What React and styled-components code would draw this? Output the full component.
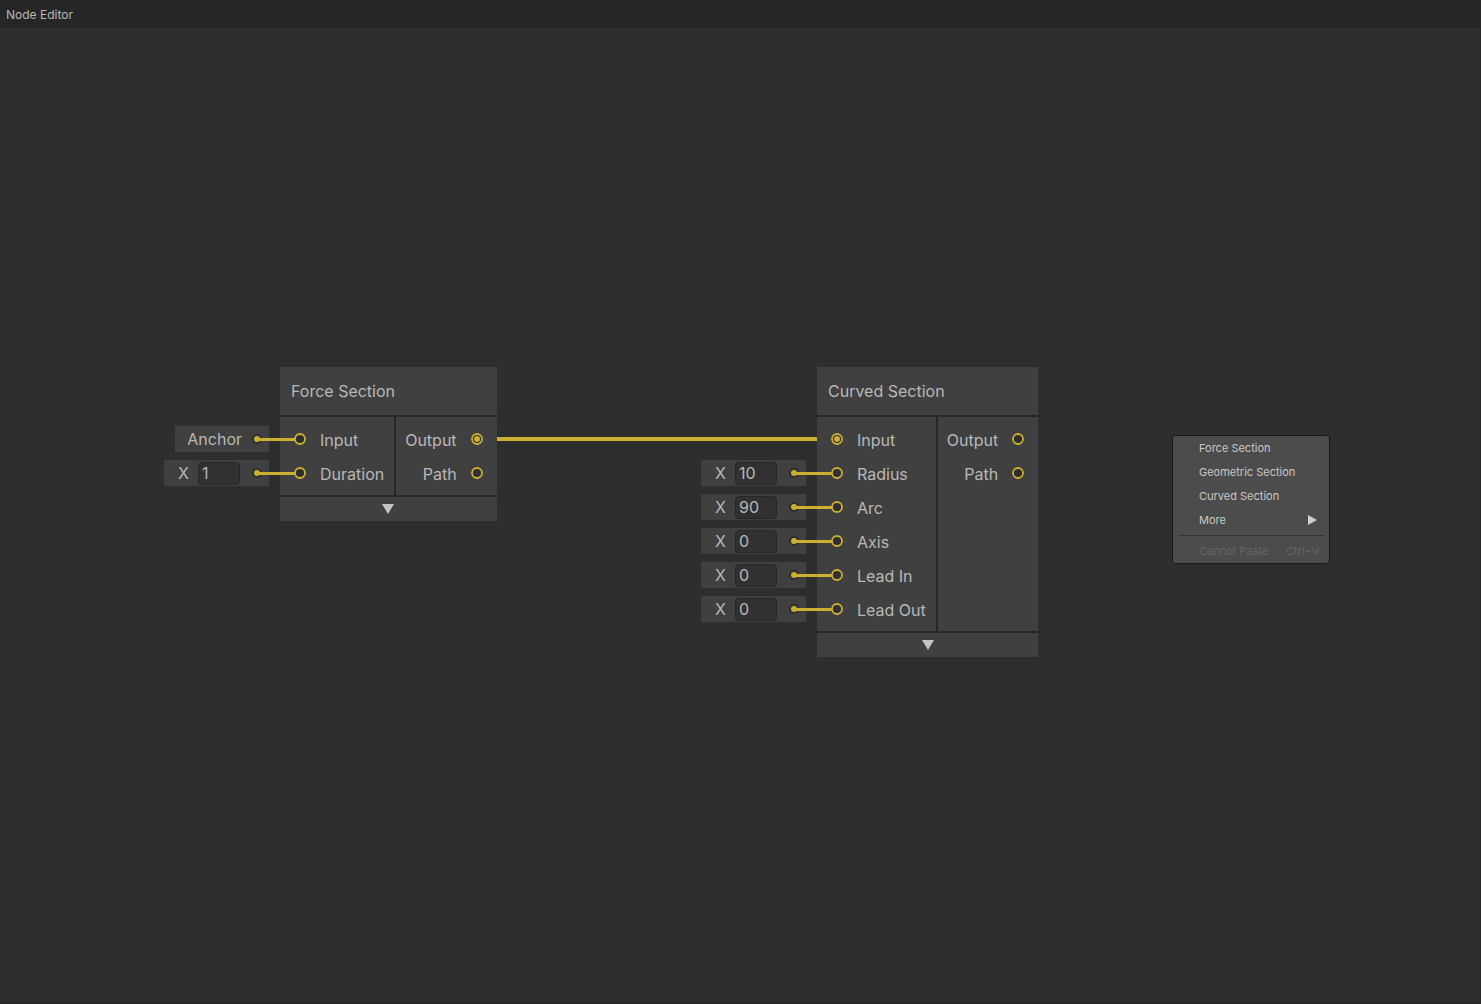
import React from "react";
import styled, { createGlobalStyle } from "styled-components";

const colors = {
  canvas: "#2e2e2e",
  bar: "#262626",
  panel: "#404040",
  line: "#272727",
  field: "#313131",
  text: "#b8b8b8",
  wire: "#ccb032",
  socket: "#2f2f2f",
};

const GlobalStyle = createGlobalStyle`
  *, *::before, *::after { box-sizing: border-box; }
  body {
    margin: 0;
    background: ${colors.canvas};
    color: ${colors.text};
    font-family: Inter, "Liberation Sans", sans-serif;
    font-size: 16px;
    line-height: 20px;
  }
  button, input { font: inherit; color: inherit; }
`;

const Window = styled.div`
  display: flex;
  flex-direction: column;
  min-height: 100vh;
  border-right: 1px solid #292929;
  border-bottom: 2px solid #272727;
`;

const TitleBar = styled.header`
  height: 28px;
  padding: 1px 6px 0;
  background: ${colors.bar};
`;

const Title = styled.h1`
  margin: 0;
  font-size: 12px;
  font-weight: 400;
  line-height: 28px;
`;

const Canvas = styled.main`
  position: relative;
  flex: 1;
  overflow: hidden;
`;

const Wires = styled.svg`
  position: absolute;
  inset: 0;
  width: 100%;
  height: 100%;
`;

const NodeBox = styled.section`
  position: absolute;
  left: ${(p) => p.$x}px;
  top: ${(p) => p.$y}px;
  display: flex;
  flex-direction: column;
  background: ${colors.panel};
`;

const NodeTitle = styled.h2`
  margin: 0;
  padding: 0 11px;
  font-size: 16px;
  font-weight: 400;
  line-height: 48px;
`;

const NodeBody = styled.div`
  display: flex;
  border: solid ${colors.line};
  border-width: 2px 0;
`;

const PortList = styled.ul`
  flex: ${(p) => (p.$side === "in" ? "1 0 auto" : "0 0 auto")};
  display: flex;
  flex-direction: column;
  margin: 0;
  padding: ${(p) => (p.$side === "in" ? "5px 10px 5px 14px" : "5px 14px 5px 9px")};
  border-left: ${(p) => (p.$side === "in" ? "0" : `2px solid ${colors.line}`)};
  list-style: none;
`;

const PortRow = styled.li`
  position: relative;
  display: flex;
  flex-direction: ${(p) => (p.$side === "in" ? "row" : "row-reverse")};
  align-items: center;
  gap: 14px;
  height: 34px;
`;

const PortName = styled.span`
  padding-top: 2px;
  white-space: nowrap;
`;

const Socket = styled.svg`
  flex: none;
  display: block;
  width: 12px;
  height: 12px;
`;

const CollapseButton = styled.button`
  display: flex;
  align-items: center;
  justify-content: center;
  height: 24px;
  padding: 0;
  border: 0;
  background: transparent;
`;

/* Default value attached to the outer side of an unconnected input. */
const ValueChip = styled.div`
  position: absolute;
  right: calc(100% + 25px);
  display: flex;
  align-items: center;
  height: 26px;
  padding: 0 7px 0 ${(p) => (p.$wide ? 14 : 12)}px;
  background: ${colors.panel};
`;

const ChipText = styled.span`
  margin-right: 10px;
`;

const AxisLabel = styled.label`
  width: 20px;
`;

const ValueInput = styled.input`
  width: 42px;
  height: 23px;
  margin-right: 12px;
  padding: 0 3px;
  border: 1px solid #262626;
  border-radius: 4px;
  background: ${colors.field};
`;

const ChipDot = styled.span`
  position: relative;
  width: 10px;
  height: 10px;
  border: 2px solid ${colors.socket};
  border-radius: 50%;
  background: ${colors.wire};

  &::after {
    content: "";
    position: absolute;
    left: 3px;
    top: 0;
    bottom: 0;
    width: 38px;
    height: 3px;
    margin: auto 0;
    background: ${colors.wire};
  }
`;

const Menu = styled.div`
  position: absolute;
  left: ${(p) => p.$x}px;
  top: ${(p) => p.$y}px;
  width: 158px;
  border: 1px solid #191919;
  border-radius: 3px;
  background: #4c4c4c;
  font-size: 11px;
`;

const MenuItem = styled.button`
  display: flex;
  align-items: center;
  justify-content: space-between;
  width: 100%;
  height: 24px;
  padding: 0 ${(p) => (p.disabled ? 10 : 12)}px 0 26px;
  border: 0;
  background: transparent;
  color: #c8c8c8;
  white-space: nowrap;

  &:disabled { color: #656565; }
`;

const MenuLine = styled.hr`
  height: 1px;
  margin: 3px 5px;
  border: 0;
  background: #323232;
`;

function Port({ connected }) {
  return (
    <Socket viewBox="0 0 12 12" aria-hidden="true">
      <circle cx="6" cy="6" r="5" fill={colors.socket} stroke={colors.wire} strokeWidth="1.8" />
      {connected && <circle cx="6" cy="6" r="3" fill={colors.wire} />}
    </Socket>
  );
}

function Chip({ id, port }) {
  return (
    <ValueChip $wide={!port.anchor}>
      {port.anchor ? (
        <ChipText>{port.anchor}</ChipText>
      ) : (
        <>
          <AxisLabel htmlFor={id}>X</AxisLabel>
          <ValueInput id={id} defaultValue={port.value} />
        </>
      )}
      <ChipDot />
    </ValueChip>
  );
}

function Node({ name, x, y, inputs, outputs }) {
  return (
    <NodeBox $x={x} $y={y}>
      <NodeTitle>{name}</NodeTitle>
      <NodeBody>
        <PortList $side="in">
          {inputs.map((port) => (
            <PortRow key={port.name} $side="in">
              {!port.connected && <Chip id={`${name}-${port.name}`.replace(/ /g, "-")} port={port} />}
              <Port connected={port.connected} />
              <PortName>{port.name}</PortName>
            </PortRow>
          ))}
        </PortList>
        <PortList $side="out">
          {outputs.map((port) => (
            <PortRow key={port.name} $side="out">
              <Port connected={port.connected} />
              <PortName>{port.name}</PortName>
            </PortRow>
          ))}
        </PortList>
      </NodeBody>
      <CollapseButton type="button" aria-label={`Collapse ${name}`}>
        <svg width="12" height="10" viewBox="0 0 12 10" aria-hidden="true">
          <path d="M0 0H12L6 10Z" fill="#c4c4c4" />
        </svg>
      </CollapseButton>
    </NodeBox>
  );
}

const nodes = [
  {
    name: "Force Section",
    x: 280,
    y: 339,
    inputs: [
      { name: "Input", anchor: "Anchor" },
      { name: "Duration", value: "1" },
    ],
    outputs: [{ name: "Output", connected: true }, { name: "Path" }],
  },
  {
    name: "Curved Section",
    x: 817,
    y: 339,
    inputs: [
      { name: "Input", connected: true },
      { name: "Radius", value: "10" },
      { name: "Arc", value: "90" },
      { name: "Axis", value: "0" },
      { name: "Lead In", value: "0" },
      { name: "Lead Out", value: "0" },
    ],
    outputs: [{ name: "Output" }, { name: "Path" }],
  },
];

export default function App() {
  return (
    <>
      <GlobalStyle />
      <Window>
        <TitleBar>
          <Title>Node Editor</Title>
        </TitleBar>
        <Canvas>
          <Wires aria-hidden="true">
            <path d="M477 411H837" stroke={colors.wire} strokeWidth="4" />
          </Wires>
          {nodes.map((node) => (
            <Node key={node.name} {...node} />
          ))}
          <Menu $x={1172} $y={407}>
            <MenuItem type="button">Force Section</MenuItem>
            <MenuItem type="button">Geometric Section</MenuItem>
            <MenuItem type="button">Curved Section</MenuItem>
            <MenuItem type="button">
              More
              <svg width="9" height="10" viewBox="0 0 9 10" aria-hidden="true">
                <path d="M0 0L9 5L0 10Z" fill="#d0d0d0" />
              </svg>
            </MenuItem>
            <MenuLine />
            <MenuItem type="button" disabled>
              <span>Cannot Paste</span>
              <span>Ctrl+V</span>
            </MenuItem>
          </Menu>
        </Canvas>
      </Window>
    </>
  );
}
